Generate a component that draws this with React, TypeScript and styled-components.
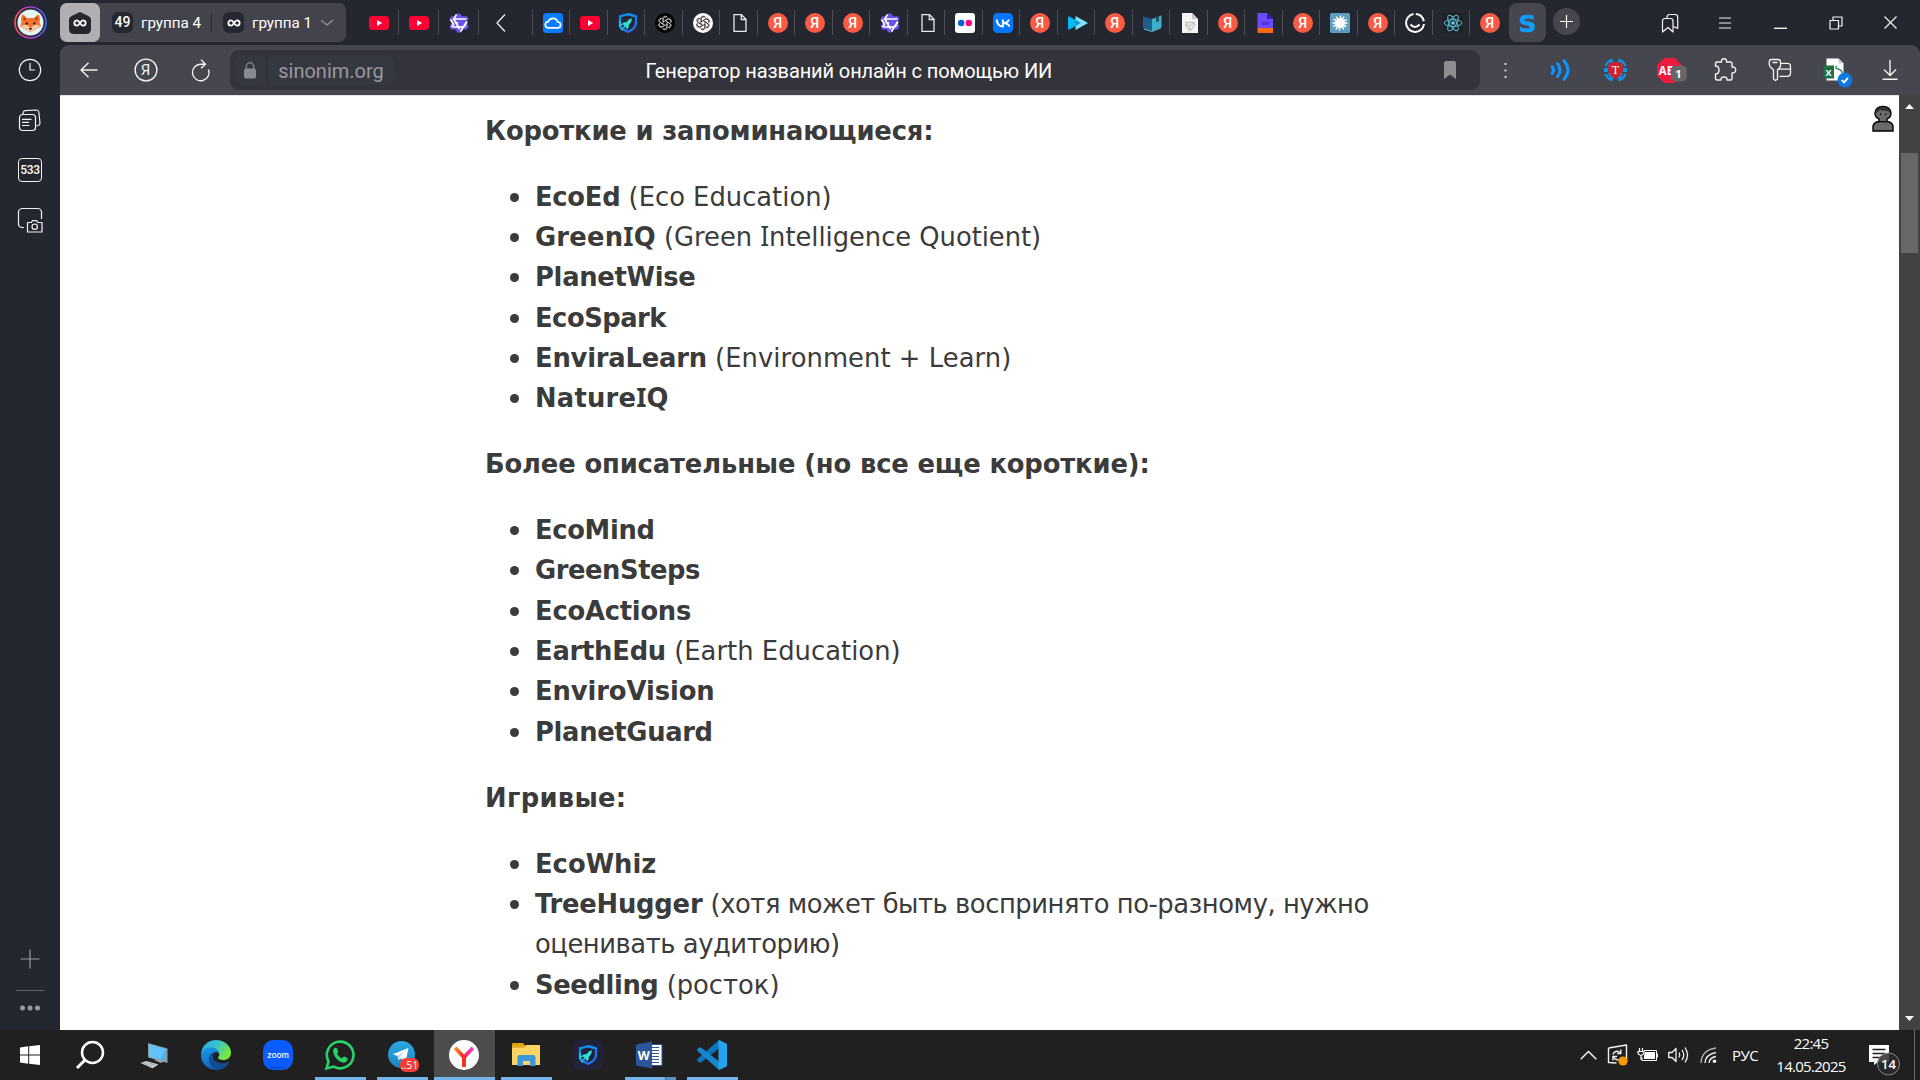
import React from 'react';
import styled, { createGlobalStyle } from 'styled-components';

const ui = `'Roboto', 'Noto Sans', sans-serif`;
const segoe = `'Open Sans', 'Noto Sans', sans-serif`;

const Global = createGlobalStyle`
  * { box-sizing: border-box; }
  html, body { margin: 0; padding: 0; background: #202020; overflow: hidden; }
  svg { display: block; flex: none; overflow: visible; }
`;

const Desktop = styled.div`
  width: 1920px;
  height: 1080px;
  display: flex;
  flex-direction: column;
  overflow: hidden;
  background: #252730;
  font-family: ${ui};
`;
const Browser = styled.div`
  display: flex;
  height: 1030px;
`;
const Sidebar = styled.aside`
  width: 60px;
  display: flex;
  flex-direction: column;
  align-items: center;
  background: #252730;
`;
const SideCell = styled.div<{ $h: number; $top?: number }>`
  height: ${p => p.$h}px;
  width: 60px;
  padding-top: ${p => p.$top ?? 0}px;
  display: flex;
  align-items: center;
  justify-content: center;
`;
const CounterBox = styled.div`
  width: 24px;
  height: 24px;
  border: 1px solid #f2f2f3;
  border-radius: 4px;
  color: #fff;
  font: 500 12px/23px ${ui};
  letter-spacing: -0.4px;
  text-align: center;
`;
const Spacer = styled.div`
  flex: 1;
`;
const SideRule = styled.div`
  width: 28px;
  height: 1px;
  background: #63646b;
`;
const Main = styled.div`
  width: 1860px;
  display: flex;
  flex-direction: column;
`;

const TabStrip = styled.div`
  height: 45px;
  display: flex;
  align-items: flex-start;
`;
const Groups = styled.div`
  width: 286px;
  height: 39px;
  margin: 3px 13px 0 0;
  border-radius: 7px;
  background: #43434b;
  display: flex;
  align-items: center;
  color: #fff;
  font-size: 15.2px;
`;
const GroupHome = styled.div`
  width: 40px;
  height: 39px;
  border-radius: 7px;
  background: #b0b0b4;
  display: flex;
  align-items: center;
  justify-content: center;
`;
const GroupChip = styled.span`
  width: 21px;
  height: 21px;
  border-radius: 6px;
  background: #252730;
  font: 500 14px/21px ${ui};
  display: flex;
  align-items: center;
  justify-content: center;
`;
const Group = styled.div<{ $w: number }>`
  width: ${p => p.$w}px;
  padding-left: 12px;
  display: flex;
  align-items: center;
  gap: 8px;
  white-space: nowrap;
`;
const GroupRule = styled.span`
  width: 1px;
  height: 18px;
  margin-right: -1px;
  background: #26272f;
`;
const Tab = styled.div<{ $w: number; $rule?: boolean }>`
  width: ${p => p.$w}px;
  height: 25px;
  margin-top: 10px;
  padding-left: 10px;
  display: flex;
  align-items: center;
  border-right: 1px solid ${p => (p.$rule === false ? 'transparent' : '#4d4e55')};
`;
const TabArrow = styled.div`
  width: 53.5px;
  height: 25px;
  margin-top: 10px;
  padding-left: 17px;
  display: flex;
  align-items: center;
  border-right: 1px solid #4d4e55;
`;
const ActiveTab = styled.div`
  width: 37px;
  height: 39px;
  margin: 3px 0 0 1px;
  border-radius: 8px;
  background: #46464f;
  display: flex;
  align-items: center;
  justify-content: center;
`;
const NewTab = styled.div`
  width: 27px;
  height: 27px;
  margin: 8px 0 0 7px;
  border-radius: 50%;
  background: #46464f;
  display: flex;
  align-items: center;
  justify-content: center;
`;
const IconCell = styled.div<{ $h?: number }>`
  width: 55px;
  height: ${p => p.$h ?? 50}px;
  display: flex;
  align-items: center;
  justify-content: center;
`;
const WindowControls = styled.div`
  display: flex;
  margin-left: auto;
  margin-right: 2px;
`;

const Toolbar = styled.div`
  height: 50px;
  display: flex;
  align-items: center;
  border-radius: 9px 9px 0 0;
  background: #46464f;
`;
const NavCell = styled.div<{ $w: number }>`
  width: ${p => p.$w}px;
  display: flex;
  align-items: center;
  justify-content: center;
`;
const AddressBar = styled.div`
  width: 1250px;
  height: 40px;
  margin-left: 1px;
  padding: 0 22px 0 5px;
  border-radius: 9px;
  background: #33333c;
  display: flex;
  align-items: center;
`;
const LockBox = styled.div`
  width: 30px;
  height: 30px;
  border-radius: 7px;
  background: #363841;
  display: flex;
  align-items: center;
  justify-content: center;
`;
const Domain = styled.div`
  width: 126px;
  height: 30px;
  margin-left: 3px;
  border-radius: 7px;
  background: #363841;
  color: #98989e;
  font: 20px/32px ${ui};
  text-align: center;
`;
const PageTitle = styled.div`
  margin-left: 251.5px;
  padding-top: 1px;
  color: #fff;
  font: 20px/42px ${ui};
  letter-spacing: -0.1px;
  white-space: nowrap;
`;

const Viewport = styled.div`
  height: 935px;
  display: flex;
  background: #fff;
`;
const Page = styled.main`
  width: 1839px;
  height: 935px;
  display: flex;
  justify-content: space-between;
  overflow: hidden;
  border-top: 1px solid #e4e4e6;
`;
const Article = styled.article`
  width: 905px;
  margin-left: 425px;
  padding-top: 14.7px;
  color: #3b3b3b;
  font-family: 'DejaVu Sans', sans-serif;
  font-size: 25.8px;
  line-height: 40.33px;
`;
const Heading = styled.p`
  margin: 0 0 25.6px;
`;
const List = styled.ul`
  margin: 0 0 25.6px;
  padding: 0;
  list-style: none;
`;
const Item = styled.li`
  display: flex;
`;
const Bullet = styled.span`
  width: 9px;
  height: 9px;
  margin: 16px 16px 0 25px;
  border-radius: 50%;
  background: #3b3b3b;
  flex: none;
`;
const Strong = styled.b<{ $track: number }>`
  letter-spacing: ${p => p.$track}px;
`;
const Slab = styled.span`
  font-family: 'Noto Sans', sans-serif;
  font-size: 26.4px;
  line-height: 1;
`;
const Note = styled.span<{ $track: number }>`
  letter-spacing: ${p => p.$track}px;
`;
const Visitor = styled.div`
  margin: 9px 5px 0 0;
`;
const Scrollbar = styled.div`
  width: 21px;
  height: 935px;
  display: flex;
  flex-direction: column;
  align-items: center;
  background: #424242;
`;
const Thumb = styled.div`
  width: 17px;
  height: 100px;
  margin-top: 44px;
  background: #686868;
`;

const Taskbar = styled.footer`
  height: 50px;
  display: flex;
  background: #202021;
  color: #fff;
  font-family: ${segoe};
`;
const TaskCell = styled.div<{ $w: number; $right?: number }>`
  width: ${p => p.$w}px;
  height: 50px;
  padding-right: ${p => p.$right ?? 0}px;
  display: flex;
  align-items: center;
  justify-content: center;
`;
const TaskApp = styled.div<{ $active?: boolean }>`
  width: ${p => (p.$active ? 61 : 51)}px;
  height: 50px;
  margin: 0 ${p => (p.$active ? 0 : 5)}px 0 ${p => (p.$active ? 1 : 6)}px;
  display: flex;
  flex-direction: column;
  align-items: center;
  justify-content: space-between;
  background: ${p => (p.$active ? '#4d4d4d' : 'transparent')};
`;
const AppIcon = styled.div`
  height: 47px;
  padding-top: 10px;
  margin-right: 1px;
`;
const Underline = styled.div<{ $split?: boolean; $on: boolean }>`
  width: 100%;
  height: 3px;
  background: ${p =>
    !p.$on ? 'transparent' : p.$split ? 'linear-gradient(90deg, #76b5ec 40px, #4a7196 40px, #4a7196 41px, #5f8fbb 41px)' : '#76b5ec'};
`;
const TrayCell = styled.div<{ $w: number; $right?: number }>`
  width: ${p => p.$w}px;
  height: 50px;
  padding-right: ${p => p.$right ?? 0}px;
  display: flex;
  align-items: center;
  justify-content: center;
`;
const Lang = styled.div`
  width: 35px;
  padding-left: 7px;
  font-size: 15px;
  line-height: 50px;
  letter-spacing: -0.5px;
  text-align: center;
`;
const Clock = styled.div`
  width: 104px;
  padding-top: 2px;
  display: flex;
  flex-direction: column;
  align-items: center;
  font-size: 15px;
  line-height: 23px;
  letter-spacing: -0.7px;
`;
const ShowDesktop = styled.div`
  width: 6px;
  height: 50px;
  border-left: 1px solid #6a6a6a;
`;

/* ---------- favicons ---------- */
const YouTube = () => (
  <svg width="20" height="20" viewBox="0 0 20 20">
    <rect y="3" width="20" height="14" rx="3.4" fill="#ff0033" />
    <path d="M8 7l5.2 3L8 13z" fill="#fff" />
  </svg>
);
const Qwen = () => (
  <svg width="20" height="20" viewBox="0 0 20 20">
    <path d="M8 .5l3.600.3 1.300 2.500h5.200l1.500 2.500-2.300 3.800 2.200 4-1.600 2.600-3.600.2-2.500 3.200H8.300l-1.800-3H2.200L.6 13.500l2-3.800L.6 6l1.600-2.700H6.500z" fill="#6a52ee" />
    <path d="M7.500 1.300L4.800 6h12.700M1.400 6.500L4.600 11l-2 3.300M4.800 6l5.700 10M18 8.500l-2.600 5-5 .3M11.500 18.500l6.300-10M4 14l4.500-.1L8 9" fill="none" stroke="#fff" strokeWidth="1.7" />
  </svg>
);
const Cloud = () => (
  <svg width="20" height="20" viewBox="0 0 20 20">
    <rect width="20" height="20" rx="3.500" fill="#0a7cff" />
    <path d="M5.500 14.800a3.100 3.100 0 0 1-.3-6.200 5 5 0 0 1 9.500.4 2.900 2.900 0 0 1 0 5.800z" fill="none" stroke="#fff" strokeWidth="1.7" />
  </svg>
);
const ShieldRocket = ({ s = 20 }: { s?: number }) => (
  <svg width={s} height={s} viewBox="0 0 20 20">
    <path d="M10 1.200l8 2.200v6.900q-.8 5.500-8 8.500-4.500-1.800-6.500-4.500" fill="none" stroke="#1f76f5" strokeWidth="2.300" />
    <path d="M2 12V3.400L10 1.200l8 2.200" fill="none" stroke="#0d8ff2" strokeWidth="2.200" />
    <path d="M2 14V8" stroke="#11b8ec" strokeWidth="2.200" />
    <path d="M14 5.500q-3.500.3-5 3.500L5.500 9.500 4 11.700l2.500.3-2 3.500 3.500-1.800.5 2.800 2-1.800.3-2.700q3-2.500 3.200-6.500z" fill="#2fe0dc" />
    <path d="M1 11l4-.5-2.500 3.500 3 2.500-1.500 1.500Q1 15 1 11z" fill="#19c9e6" />
  </svg>
);
const Knot = ({ dark }: { dark?: boolean }) => (
  <svg width="20" height="20" viewBox="0 0 20 20">
    <circle cx="10" cy="10" r="10" fill={dark ? '#000' : '#fff'} />
    <g fill="none" stroke={dark ? '#c8c8c8' : '#333'} strokeWidth=".8">
      {[0, 60, 120, 180, 240, 300].map(a => (
        <path key={a} transform={`rotate(${a} 10 10)`} d="M8 11.200V6.400a2.500 2.500 0 0 1 4.600-1.300M10 7.700l3.700-2.100a2.500 2.500 0 0 1 2.500 3.500" />
      ))}
    </g>
  </svg>
);
const BlankDoc = () => (
  <svg width="20" height="20" viewBox="0 0 20 20">
    <path d="M4 1.700h7.500L16 6.300v12H4zM11.300 1.700v4.800H16" fill="none" stroke="#e8e8ea" strokeWidth="1.300" />
  </svg>
);
const Ya = () => (
  <svg width="20" height="20" viewBox="0 0 20 20">
    <circle cx="10" cy="10" r="10" fill="#fc5b43" />
    <text x="9.700" y="15.200" textAnchor="middle" fontFamily="Roboto, sans-serif" fontWeight="500" fontSize="14.500" fill="#fff">Я</text>
  </svg>
);
const Flickr = () => (
  <svg width="20" height="20" viewBox="0 0 20 20">
    <rect width="20" height="20" rx="3" fill="#fff" />
    <circle cx="6.200" cy="10" r="3.200" fill="#0063dc" />
    <circle cx="13.800" cy="10" r="3.200" fill="#ff0084" />
  </svg>
);
const Vk = () => (
  <svg width="20" height="20" viewBox="0 0 20 20">
    <rect width="20" height="20" rx="4.500" fill="#07f" />
    <path d="M3.700 6.500c.4 4.500 2.500 7 6.200 7V6.500M16 6.500c-.7 2-2.500 3.300-5.500 3.500 3 .2 5 1.500 6 3.700" fill="none" stroke="#fff" strokeWidth="2" />
  </svg>
);
const PlayArrows = () => (
  <svg width="20" height="20" viewBox="0 0 20 20">
    <path d="M7.500 3L20 10 7.500 17z" fill="#7be6fb" />
    <path d="M0 4.500q0-1.500 1.500-1L12.500 10 1.500 16.500q-1.500.5-1.500-1z" fill="#00b9f5" />
    <path d="M7.500 7v6l5-3z" fill="#2390c8" />
  </svg>
);
const Book = () => (
  <svg width="20" height="20" viewBox="0 0 20 20">
    <path d="M0 3.500l9 2.500v12L0 15z" fill="#1f5f8b" />
    <path d="M9 6l9.500-3.500V14L9 18z" fill="#3bb0cd" />
    <path d="M13 4.400l3-1.200V9l-1.500-1L13 10z" fill="#1f5068" />
    <path d="M1 16l8 2.500 9-3.700" fill="none" stroke="#6fc5de" strokeWidth="1" />
  </svg>
);
const WhiteDoc = () => (
  <svg width="20" height="20" viewBox="0 0 20 20">
    <path d="M2 0h10l6 6v14H2z" fill="#f4f4f4" />
    <path d="M12 0l6 6h-6z" fill="#c9c9c9" />
    <path d="M6 9.500h8l1 2-4.500 6-1.500-.2-3.500-5.500zM6 11l3.500 2 4-2.500M9.700 13v3.500" fill="none" stroke="#c4c4c4" strokeWidth="1.300" />
  </svg>
);
const FormDoc = () => (
  <svg width="20" height="20" viewBox="0 0 20 20">
    <path d="M2.500 0h9.500l6 6v9H2.500z" fill="#6a4dff" />
    <path d="M12 0l6 6h-6z" fill="#3a14b8" />
    <path d="M6 8.500h8.500v3.500H6z" fill="#5636d8" />
    <path d="M2.500 15H18v5H2.500z" fill="#ff6a13" />
  </svg>
);
const Burst = () => (
  <svg width="20" height="20" viewBox="0 0 20 20">
    <rect width="20" height="20" rx="1.500" fill="#5d9fc0" />
    <circle cx="10" cy="10" r="5" fill="#fff" />
    <g stroke="#fff" strokeWidth="1.500">
      {[5, 33, 62, 90, 122, 150].map(a => (
        <path key={a} transform={`rotate(${a} 10 10)`} d="M10 2.500v15" />
      ))}
    </g>
  </svg>
);
const SmileC = () => (
  <svg width="20" height="20" viewBox="0 0 20 20" fill="none" stroke="#fff" strokeWidth="2">
    <path d="M8.500 1.100A9 9 0 1 0 19 11M10.800 1A9 9 0 0 1 18.800 8.200" />
    <path d="M5.500 11.500q4.500 5 9 0" />
  </svg>
);
const ReactLogo = () => (
  <svg width="20" height="20" viewBox="0 0 20 20">
    <rect width="20" height="20" fill="#202123" />
    <circle cx="10" cy="10" r="1.700" fill="#61dafb" />
    <g fill="none" stroke="#55bed9" strokeWidth="1">
      {[0, 60, 120].map(a => (
        <ellipse key={a} transform={`rotate(${a} 10 10)`} cx="10" cy="10" rx="8.800" ry="3.400" />
      ))}
    </g>
  </svg>
);
const LetterS = () => (
  <svg width="20" height="22" viewBox="0 0 20 22">
    <text x="1.500" y="19.500" fontFamily="DejaVu Sans, sans-serif" fontWeight="700" fontSize="23" textLength="18" lengthAdjust="spacingAndGlyphs" fill="#0f9dff" stroke="#0f9dff" strokeWidth=".5">S</text>
  </svg>
);

const DarkKnot = () => <Knot dark />;
const tabs: React.ComponentType[] = [
  Cloud, YouTube, ShieldRocket, DarkKnot, Knot, BlankDoc, Ya, Ya, Ya, Qwen, BlankDoc, Flickr, Vk,
  Ya, PlayArrows, Ya, Book, WhiteDoc, Ya, FormDoc, Ya, Burst, Ya, SmileC, ReactLogo, Ya,
];

/* ---------- line icons ---------- */
const Line = ({ w, h, d, c = '#f2f2f3', sw = 1.2, children }: { w: number; h: number; d?: string; c?: string; sw?: number; children?: React.ReactNode }) => (
  <svg width={w} height={h} viewBox={`0 0 ${w} ${h}`} fill="none" stroke={c} strokeWidth={sw} strokeLinejoin="round">
    {d && <path d={d} />}
    {children}
  </svg>
);
const Infinity8 = () => (
  <Line w={12} h={8} c="#fff" sw={1.8} d="M6 4C4.800 2 4 1.300 3 1.300a2.600 2.600 0 0 0 0 5.300c1 0 1.800-.7 3-2.600s2-2.700 3-2.700a2.600 2.600 0 0 1 0 5.300c-1 0-1.800-.7-3-2.600z" />
);
const Fox = () => (
  <svg width="33" height="33" viewBox="0 0 33 33">
    <defs>
      <linearGradient id="ring" x1="0" y1="0" x2="1" y2="0">
        <stop offset="0" stopColor="#ff4a55" />
        <stop offset=".5" stopColor="#a63bd0" />
        <stop offset="1" stopColor="#3a66ff" />
      </linearGradient>
    </defs>
    <circle cx="16.500" cy="16.500" r="15.500" fill="none" stroke="url(#ring)" strokeWidth="1.700" />
    <circle cx="16.500" cy="16.500" r="13" fill="#e3f6f4" />
    <path d="M8 8.500q3 .5 5 3.500h7q2-3 5-3.500 1.500 4 .5 8l1.500 4-6 3.500-4.500 2-4.500-2-6-3.500 1.500-4q-1-4 .5-8z" fill="#f5742c" />
    <path d="M9.500 10.500l2.500 2.500-2 2zM23.500 10.500L21 13l2 2z" fill="#8c3a2a" />
    <path d="M6.500 20l6-1.500 4 3.500 4-3.500 6 1.500-5.500 4.500-4.500 2-4.500-2z" fill="#f7c9a4" />
    <path d="M14.500 22h4l-2 2.500z" fill="#4a2c2a" />
    <circle cx="12.700" cy="17.500" r="1.200" fill="#3a2020" />
    <circle cx="20.300" cy="17.500" r="1.200" fill="#3a2020" />
  </svg>
);

/* ---------- taskbar icons ---------- */
const Win = () => (
  <svg width="20" height="20" viewBox="0 0 20 20" fill="#fff">
    <path d="M0 2.500l8.200-1.200v8.200H0zM9.200 1.200L20 0v9.500H9.200zM0 10.500h8.200v8.200L0 17.500zM9.200 10.500H20V20L9.200 18.800z" />
  </svg>
);
const Pc = () => (
  <svg width="28" height="28" viewBox="0 -2 28 28">
    <path d="M8 1l19.500 5.500V21L8 15.500z" fill="#8c9aa6" />
    <path d="M9 2.200l17 5v12L9 14.500z" fill="#45b3f3" />
    <path d="M9 2.200l17 5-6 10.300-11-3z" fill="#63c4fb" />
    <path d="M14 18l4-1.500 7 2-4 2.500z" fill="#9aa3aa" />
    <path d="M.5 21l6-2 12 3.500-6 3.800z" fill="#d8dcdf" />
    <path d="M3 21.200l10 3.200M6 20l10 3.200" stroke="#858b90" strokeWidth=".8" />
  </svg>
);
const Edge = () => (
  <svg width="30" height="30" viewBox="0 0 30 30">
    <defs>
      <linearGradient id="eg" x1="0" y1="0" x2="1" y2=".5">
        <stop offset="0" stopColor="#28a5e3" /><stop offset=".5" stopColor="#35c4cf" /><stop offset="1" stopColor="#7be83c" />
      </linearGradient>
      <linearGradient id="eb" x1="0" y1="0" x2="0.300" y2="1">
        <stop offset="0" stopColor="#1a9be6" /><stop offset="1" stopColor="#1266bd" />
      </linearGradient>
    </defs>
    <path d="M0 14C1 5 7.500 0 15 0c8.500 0 15 6 15 12.500 0 5-3.500 7.500-8 7.500-3 0-5-1-5-2.200 0-.8 1.200-1.300 1.200-3.300 0-3-3.200-5-7.200-5C6 9.500 2 12 0 14z" fill="url(#eg)" />
    <path d="M0 15c0-5 5-7.500 10-7.500 4.500 0 8.300 2.700 8.300 6.500-.3-1-1.500-2-3.300-2-3 0-5 3-5 7 0 5 4 9.500 9 10.500C8 31.500 0 24 0 15z" fill="url(#eb)" />
    <path d="M15 12c-2.500 1.200-3 3-3 4.500 0 4 4.500 6.700 9 6.700 2.500 0 4.500-.7 6-1.300.8-.3 1 .3.700 1C25.500 27 21.500 30 16 30c-5-1.500-8-6-8-11 0-4 3-7 7-7z" fill="#124c92" />
  </svg>
);
const Zoom = () => (
  <svg width="30" height="30" viewBox="0 0 30 30">
    <rect width="30" height="30" rx="10.500" fill="#0b5cff" />
    <path d="M5 26q10 6 20 0-10 2.500-20 0z" fill="#0546b8" />
    <text x="15" y="17.500" textAnchor="middle" fontFamily="Inter, sans-serif" fontWeight="500" fontSize="8.500" textLength="22" lengthAdjust="spacingAndGlyphs" fill="#fff">zoom</text>
  </svg>
);
const WhatsApp = () => (
  <svg width="30" height="30" viewBox="0 0 30 30">
    <path d="M1.500 28.500l2-7.200A13.300 13.300 0 1 1 8.800 26.600z" fill="none" stroke="#25d366" strokeWidth="2.600" />
    <path d="M8 11q0-2.500 2-3.300 1.500-.3 2 .8l1.200 3q.2.700-1.200 2.300 1.700 3.300 5 4.600 1.500-2.200 2.200-1.900l3.200 1.600q.7.500-.3 2.700-1.500 2.400-4.800 1.700Q9.500 20 8 11z" fill="#25d366" />
  </svg>
);
const Telegram = () => (
  <svg width="30" height="30" viewBox="0 0 30 30">
    <defs>
      <linearGradient id="tg" x1="0" y1="0" x2="0" y2="1">
        <stop offset="0" stopColor="#2ba8e3" /><stop offset="1" stopColor="#1c86c2" />
      </linearGradient>
    </defs>
    <circle cx="14.500" cy="14.500" r="13.500" fill="url(#tg)" />
    <path d="M5.500 14.200L21.500 8l-3 14.300-5-4-2.300 2.300-.5-4.500z" fill="#fff" />
    <path d="M10.700 16.100l7-5-5 6.200-1.500 3.300z" fill="#b9d8ea" />
    <rect x="13" y="18" width="19" height="14" rx="6" fill="#f23c34" />
    <text x="22.500" y="29" textAnchor="middle" fontFamily="Open Sans, sans-serif" fontSize="10.500" fill="#fff">..51</text>
  </svg>
);
const YaBrowser = () => (
  <svg width="30" height="30" viewBox="0 0 30 30">
    <defs>
      <linearGradient id="yb" x1="0" y1="0" x2="1" y2="0">
        <stop offset="0" stopColor="#ff9a1f" /><stop offset=".45" stopColor="#fb2a2a" /><stop offset="1" stopColor="#f43df0" />
      </linearGradient>
    </defs>
    <circle cx="15" cy="15" r="15" fill="#fff" />
    <path d="M4.800 9.300l2.600-2.700 7.600 8 7.600-8 2.600 2.700-8.200 8.700v9h-4v-9z" fill="url(#yb)" />
    <path d="M13 17l2-2.400 2 2.400v10h-4z" fill="#fb2f24" />
  </svg>
);
const Folder = () => (
  <svg width="30" height="30" viewBox="0 0 30 30">
    <path d="M1 4q0-1 1-1h10l2.500 3H1z" fill="#e0a100" />
    <path d="M1 6h13l2-1h13v20H1z" fill="#ffd462" />
    <path d="M1 7h12l2-2" fill="none" stroke="#c78d00" />
    <path d="M6.500 26V17q0-2 2-2h14q2 0 2 2v9H19v-5h-7v5z" fill="#3d97dc" />
  </svg>
);
const ShieldApp = () => (
  <svg width="30" height="30" viewBox="0 0 30 30">
    <rect width="30" height="30" rx="7" fill="#22233b" />
    <g transform="translate(5 5)"><ShieldRocket s={20} /></g>
  </svg>
);
const Word = () => (
  <svg width="30" height="30" viewBox="0 0 30 30">
    <path d="M15 4.500h12v21H15z" fill="#fff" stroke="#2b579a" />
    <path d="M16 7.500h8M16 10.500h8M16 13.500h8M16 16.500h8M16 19.500h8M16 22.500h8" stroke="#2b579a" strokeWidth="1.200" />
    <path d="M1 4.500L17 1.500v27L1 25.500z" fill="#2b579a" />
    <text x="8.800" y="20.300" textAnchor="middle" fontFamily="Open Sans, sans-serif" fontWeight="700" fontSize="13" textLength="12" lengthAdjust="spacingAndGlyphs" fill="#fff">W</text>
  </svg>
);
const VsCode = () => (
  <svg width="30" height="30" viewBox="0 0 30 30">
    <path d="M22 0v8.500L4 22.500q-1 .7-2-.2L.5 21q-1-1 0-2z" fill="#0b73b8" />
    <path d="M22 30v-8.500L4 7.500q-1-.7-2 .2L.5 9q-1 1 0 2z" fill="#1587d0" />
    <path d="M22 0l7 3.200q1 .5 1 1.500v20.600q0 1-1 1.500L22 30q-.5 0-.5-1V1q0-1 .5-1z" fill="#26a3ee" />
  </svg>
);

const apps: { icon: React.ComponentType; on: boolean; active?: boolean; split?: boolean }[] = [
  { icon: Pc, on: false },
  { icon: Edge, on: false },
  { icon: Zoom, on: false },
  { icon: WhatsApp, on: true },
  { icon: Telegram, on: true },
  { icon: YaBrowser, on: true, active: true },
  { icon: Folder, on: true },
  { icon: ShieldApp, on: false },
  { icon: Word, on: true, split: true },
  { icon: VsCode, on: true },
];

type Entry = { name: string; track: number; note?: string; noteTrack?: number };
const sections: { title: string; track: number; items: Entry[] }[] = [
  {
    title: 'Короткие и запоминающиеся:',
    track: -0.17,
    items: [
      { name: 'EcoEd', track: -0.27, note: '(Eco Education)', noteTrack: 0 },
      { name: 'GreenIQ', track: 0.2, note: '(Green Intelligence Quotient)', noteTrack: -0.04 },
      { name: 'PlanetWise', track: -0.3 },
      { name: 'EcoSpark', track: -0.5 },
      { name: 'EnviraLearn', track: -0.21, note: '(Environment + Learn)', noteTrack: 0.06 },
      { name: 'NatureIQ', track: 0.2 },
    ],
  },
  {
    title: 'Более описательные (но все еще короткие):',
    track: -0.14,
    items: [
      { name: 'EcoMind', track: -0.35 },
      { name: 'GreenSteps', track: -0.45 },
      { name: 'EcoActions', track: -0.24 },
      { name: 'EarthEdu', track: -0.24, note: '(Earth Education)', noteTrack: 0.03 },
      { name: 'EnviroVision', track: -0.1 },
      { name: 'PlanetGuard', track: -0.34 },
    ],
  },
  {
    title: 'Игривые:',
    track: 0.3,
    items: [
      { name: 'EcoWhiz', track: 0 },
      { name: 'TreeHugger', track: -0.22, note: '(хотя может быть воспринято по-разному, нужно оценивать аудиторию)', noteTrack: -0.45 },
      { name: 'Seedling', track: -0.39, note: '(росток)', noteTrack: 0 },
    ],
  },
];

/* The capital I carries serifs in this face. */
const withSlabs = (text: string) =>
  text.split(/(I)/).filter(Boolean).map((part, i) => (part === 'I' ? <Slab key={i}>I</Slab> : part));

export default function App() {
  return (
    <Desktop>
      <Global />
      <Browser>
        <Sidebar>
          <SideCell $h={45}><Fox /></SideCell>
          <SideCell $h={50}><Line w={24} h={24}><circle cx="12" cy="12" r="10.700" /><path d="M12 5v7h5" /></Line></SideCell>
          <SideCell $h={50} $top={2}>
            <Line w={24} h={24} d="M5 5.500V4q.3-2 2-2.300L18.500 1q2 0 2.300 2l1.200 11q0 2-1.800 2.500l-2 .5">
              <rect x="1.500" y="5.500" width="16" height="16" rx="3" /><path d="M4 10.300h9.500M4 13.300h7M4 16.500h7.500" />
            </Line>
          </SideCell>
          <SideCell $h={50}><CounterBox>533</CounterBox></SideCell>
          <SideCell $h={50}>
            <Line w={26} h={26} d="M7 20.500H4.500q-2.700-.5-3-3V4.500q.5-2.500 3-3H21.500q2.500.5 3 3v7.500">
              <path d="M12 15.500h2.300l1.200-1.800h4l1.200 1.800H25v9.500H10.500v-9.500z" /><circle cx="17.700" cy="19.700" r="2.700" />
            </Line>
          </SideCell>
          <Spacer />
          <SideCell $h={62}><Line w={20} h={20} c="#9a9aa0" d="M10 .5v19M.5 10h19" /></SideCell>
          <SideRule />
          <SideCell $h={33}>
            <svg width="20" height="6" viewBox="0 0 20 6" fill="#9a9aa0"><circle cx="2.500" cy="3" r="2.500" /><circle cx="10" cy="3" r="2.500" /><circle cx="17.500" cy="3" r="2.500" /></svg>
          </SideCell>
          <SideCell $h={6} />
        </Sidebar>
        <Main>
          <TabStrip>
            <Groups>
              <GroupHome>
                <svg width="22" height="22" viewBox="0 0 22 22">
                  <path d="M11 0l8.500 4Q22 5 22 7.500V17q0 5-5 5H5q-5 0-5-5V7.500Q0 5 2.500 4z" fill="#252730" />
                  <g transform="translate(5 7)"><Infinity8 /></g>
                </svg>
              </GroupHome>
              <Group $w={111}><GroupChip>49</GroupChip><span>группа 4</span></Group>
              <GroupRule />
              <Group $w={109}><GroupChip><Infinity8 /></GroupChip><span>группа 1</span></Group>
              <Line w={14} h={8} c="#8b8b92" sw={1.6} d="M1 1l6 5 6-5" />
            </Groups>
            <Tab $w={40}><YouTube /></Tab>
            <Tab $w={40}><YouTube /></Tab>
            <Tab $w={40}><Qwen /></Tab>
            <TabArrow><Line w={10} h={18} d="M9 .5L1 9l8 8.500" /></TabArrow>
            {tabs.map((Icon, i) => (
              <Tab key={i} $w={37.5} $rule={i < 25}><Icon /></Tab>
            ))}
            <ActiveTab><LetterS /></ActiveTab>
            <NewTab><Line w={13} h={13} c="#fff" d="M6.500 0v13M0 6.500h13" /></NewTab>
            <WindowControls>
              <IconCell $h={45}><Line w={20} h={20} d="M1.500 19V8q0-2.500 2.500-2.500h5.500q2.500 0 2.500 2.500v11l-5-4.500zM6 5.500V4q.2-2.500 2.700-2.500h5.500q2.500 0 2.500 2.500v11.500l-4-2" /></IconCell>
              <IconCell $h={45}><Line w={13} h={12} d="M0 1h12M0 6h12M0 11h12" /></IconCell>
              <IconCell $h={45}><Line w={13} h={13} sw={1.4} d="M0 12.300h13" /></IconCell>
              <IconCell $h={45}><Line w={14} h={14} d="M1 4.500h8.500V13H1zM4 4.500V1h9v9H9.500" /></IconCell>
              <IconCell $h={45}><Line w={13} h={13} d="M.5.5l12 12M12.500.5l-12 12" /></IconCell>
            </WindowControls>
          </TabStrip>
          <Toolbar>
            <NavCell $w={58}><Line w={18} h={16} sw={1.4} d="M17.500 8H1M8.500.7L1 8l7.500 7.300" /></NavCell>
            <NavCell $w={55}>
              <Line w={24} h={24} sw={1.4}><circle cx="12" cy="12" r="10.900" /><text x="11.500" y="17.300" stroke="none" fill="#f2f2f3" textAnchor="middle" fontFamily="Roboto, sans-serif" fontSize="15">Я</text></Line>
            </NavCell>
            <NavCell $w={56}><Line w={20} h={22} sw={1.4} d="M17.500 10.500A8.300 8.300 0 1 1 9 5.200h5M10 .8l4.500 4.400-4.500 3.900" /></NavCell>
            <AddressBar>
              <LockBox>
                <svg width="12" height="17" viewBox="0 0 12 17"><path d="M2.300 7V4.500a3.700 3.700 0 0 1 7.400 0V7" fill="none" stroke="#7f858c" strokeWidth="1.400" /><rect y="6.500" width="12" height="10" rx="2" fill="#878c93" /></svg>
              </LockBox>
              <Domain>sinonim.org</Domain>
              <PageTitle>Генератор названий онлайн с помощью ИИ</PageTitle>
              <Spacer />
              <svg width="15" height="18" viewBox="0 0 15 18" fill="#8d8d92"><path d="M1 2q0-2 2-2h8q2 0 2 2v16l-6-4.500L1 18z" /></svg>
            </AddressBar>
            <NavCell $w={51}><svg width="3" height="15" viewBox="0 0 3 15" fill="#d0d0d3"><path d="M.5 0h2v2h-2zM.5 6.500h2v2h-2zM.5 13h2v2h-2z" /></svg></NavCell>
            <IconCell>
              <svg width="20" height="22" viewBox="-1.500 0 20 22" fill="none" stroke="#0f95ff" strokeWidth="2.900" strokeLinecap="round"><path d="M1.500 7.500q3 3.500 0 7M7 4.500q5 6.500 0 13M13.500 1.700q8 9.300 0 18.600" /></svg>
            </IconCell>
            <IconCell>
              <svg width="24" height="24" viewBox="-1.500 0 24 24">
                <g fill="none" stroke="#0d94e8" strokeWidth="2.200"><path d="M9 1.500Q4 3 2 8M15 1.500q5 1.500 7 6.500M9 22.500Q4 21 2 16M15 22.500q5-1.500 7-6.500M9.500 3Q6 6 5.500 9M14.500 3q3.500 3 4 6M9.500 21Q6 18 5.500 15M14.500 21q3.500-3 4-6" /><path d="M2.500 10v4M21.500 10v4" strokeWidth="4" /></g>
                <path d="M12 3.500l7 2v7q-.5 5-7 8.500-6.500-3.500-7-8.500v-7z" fill="#d1202b" />
                <text x="12" y="16" textAnchor="middle" fontFamily="Liberation Serif, serif" fontSize="12" fill="#fff">T</text>
              </svg>
            </IconCell>
            <IconCell>
              <svg width="30" height="25" viewBox="-3 0 30 25">
                <path d="M7.300 0h10.400L25 7.300v10.400L17.700 25H7.300L0 17.700V7.300z" fill="#ee1a3f" />
                <text x="1.800" y="17" fontFamily="Open Sans, sans-serif" fontWeight="700" fontSize="12.500" textLength="15.500" lengthAdjust="spacingAndGlyphs" fill="#fff">AB</text>
                <rect x="13.800" y="7.500" width="16" height="16" rx="5" fill="#666669" />
                <text x="21.500" y="19.500" textAnchor="middle" fontFamily="Open Sans, sans-serif" fontWeight="700" fontSize="11" fill="#fff">1</text>
              </svg>
            </IconCell>
            <IconCell>
              <Line w={24} h={24} sw={1.4} d="M3.500 8V5.500q0-1.500 1.500-1.500h4.500q-.5-3.200 2.500-3.200T14.500 4h4Q20 4 20 5.500V9q3.700-.5 3.700 2.800T20 15v5.500q0 1.500-1.500 1.500H15q.5-3-3-3t-3 3H5q-1.500 0-1.500-1.500V16q3.500 0 3.500-4t-3.500-4z" />
            </IconCell>
            <IconCell>
              <Line w={22} h={24} sw={1.3} d="M3 1.500h7q2.500 0 2.500 2.500v4.500L9.500 12v9L7.500 22.500 5.500 21v-9l-3.500-3.500q-1-2.500-.8-4.500 0-2 1.800-2.500zM4.500 4.500h5M12.500 5.300h7q3 0 3 3v7q0 3-3 3h-8M10 11.200h12.500" />
            </IconCell>
            <IconCell>
              <svg width="30" height="30" viewBox="-3 0 30 30">
                <path d="M4.500 3.500h12l5 5v17h-17z" fill="#fff" /><path d="M16.500 3.500l5 5h-5z" fill="#cfcfd2" />
                <path d="M15 11q-3 2 1 3t4 4" fill="none" stroke="#2f8a5c" strokeWidth="1.300" />
                <rect x="1.500" y="10.500" width="10.500" height="13" fill="#1e7145" />
                <text x="6.600" y="20.500" textAnchor="middle" fontFamily="Open Sans, sans-serif" fontWeight="700" fontSize="9" fill="#fff">X</text>
                <circle cx="23" cy="25" r="7.500" fill="#0a7ae0" /><path d="M19.700 25.200l2.300 2.200 4-4.500" fill="none" stroke="#fff" strokeWidth="1.800" />
              </svg>
            </IconCell>
            <IconCell><Line w={14} h={20} sw={1.4} d="M8 0v15M2 9.500l6 6 6-6M.5 19.300h15" /></IconCell>
          </Toolbar>
          <Viewport>
            <Page>
              <Article>
                {sections.map(s => (
                  <section key={s.title}>
                    <Heading><Strong $track={s.track}>{s.title}</Strong></Heading>
                    <List>
                      {s.items.map(it => (
                        <Item key={it.name}>
                          <Bullet />
                          <div>
                            <Strong $track={it.track}>{withSlabs(it.name)}</Strong>
                            {it.note && <> <Note $track={it.noteTrack ?? 0}>{withSlabs(it.note)}</Note></>}
                          </div>
                        </Item>
                      ))}
                    </List>
                  </section>
                ))}
              </Article>
              <Visitor>
                <svg width="22" height="27" viewBox="0 0 22 27">
                  <path d="M1 26v-5q1-4 6-4.500V14q-4-1.500-4-6Q4 1.500 11 1.500T19 8q0 4.500-4 6v2.500q5 .5 6 4.500v5z" fill="#6a6a6a" stroke="#000" strokeWidth="1.400" />
                  <path d="M4 8q.5-6 7-6t7 6l-3-2q-5 0-7-1-1.500 2-4 3z" fill="#333" />
                  <path d="M8 8.500h1.200v1.500H8zM13 8.500h1.200v1.500H13z" fill="#000" /><path d="M7 16.700h8" stroke="#000" strokeWidth="1.200" />
                </svg>
              </Visitor>
            </Page>
            <Scrollbar>
              <svg width="9" height="14" viewBox="0 0 9 14" fill="#fff"><path d="M0 14l4.500-5L9 14z" /></svg>
              <Thumb />
              <Spacer />
              <svg width="9" height="14" viewBox="0 0 9 14" fill="#fff"><path d="M0 0h9L4.500 5z" /></svg>
            </Scrollbar>
          </Viewport>
        </Main>
      </Browser>
      <Taskbar>
        <TaskCell $w={60}><Win /></TaskCell>
        <TaskCell $w={63} $right={3}>
          <svg width="30" height="30" viewBox="0 0 30 30" fill="none" stroke="#fff"><circle cx="17.500" cy="12.500" r="10.500" strokeWidth="2.500" /><path d="M10 20l-8 8" strokeWidth="3" /></svg>
        </TaskCell>
        {apps.map(({ icon: Icon, on, active, split }, i) => (
          <TaskApp key={i} $active={active}>
            <AppIcon><Icon /></AppIcon>
            <Underline $on={on} $split={split} />
          </TaskApp>
        ))}
        <Spacer />
        <TrayCell $w={30}><Line w={17} h={10} sw={1.5} d="M.7 9.300L8.500 1.500l7.800 7.800" /></TrayCell>
        <TrayCell $w={30}>
          <Line w={22} h={22} sw={1.4} d="M1.500 4L19.500 1v16M1.500 4v14.500l8 .5M6 10.500q1-3.500 5-3.300l2.500 2M13.800 5.500v4h-3.500M6 16.500v-4h4M6.500 13q2 3.500 5 2.500">
            <circle cx="16" cy="17" r="4.600" fill="#ff9800" stroke="none" />
          </Line>
        </TrayCell>
        <TrayCell $w={30}>
          <svg width="20" height="14" viewBox="0 0 20 14"><path d="M6 2.500h12.500v10H4V9" fill="none" stroke="#fff" /><path d="M7 4h10v7H6V8z" fill="#fff" /><path d="M19.300 5.500v4M1.500 0v3M4.500 0v3M0 3.500h6v1.500q-1 2.500-3 2.500T0 5zM3 7.500V12" fill="none" stroke="#fff" strokeWidth="1.200" /></svg>
        </TrayCell>
        <TrayCell $w={30}><Line w={20} h={18} sw={1.3} d="M.7 6.500H4L8 2.500v13L4 11.500H.7zM11 6.500q1.500 2.500 0 5M14 4q3.500 5 0 10M17 1.500q5 7.500 0 15" /></TrayCell>
        <TrayCell $w={31}>
          <Line w={18} h={18} sw={1.3}>
            <path d="M1 17Q1.500 4 16 2" opacity=".7" /><path d="M5 17Q5.500 8.500 16 6.500M9 17q.5-5.500 7-6.500" /><circle cx="14.500" cy="15.300" r="1.700" fill="#fff" stroke="none" />
          </Line>
        </TrayCell>
        <Lang>РУС</Lang>
        <Clock><span>22:45</span><span>14.05.2025</span></Clock>
        <TrayCell $w={51} $right={12}>
          <svg width="34" height="34" viewBox="0 0 34 34">
            <path d="M3 7h20v17H12l-4 3v-3H3z" fill="#fff" /><path d="M6.500 11.500h13M6.500 15.500h13M6.500 19.500h9" stroke="#202021" strokeWidth="1.400" />
            <circle cx="22.500" cy="26" r="11" fill="#2c2c2d" fillOpacity=".85" stroke="#8a8a8a" />
            <text x="22.500" y="31" textAnchor="middle" fontFamily="Open Sans, sans-serif" fontWeight="600" fontSize="13" fill="#fff">14</text>
          </svg>
        </TrayCell>
        <ShowDesktop />
      </Taskbar>
    </Desktop>
  );
}
